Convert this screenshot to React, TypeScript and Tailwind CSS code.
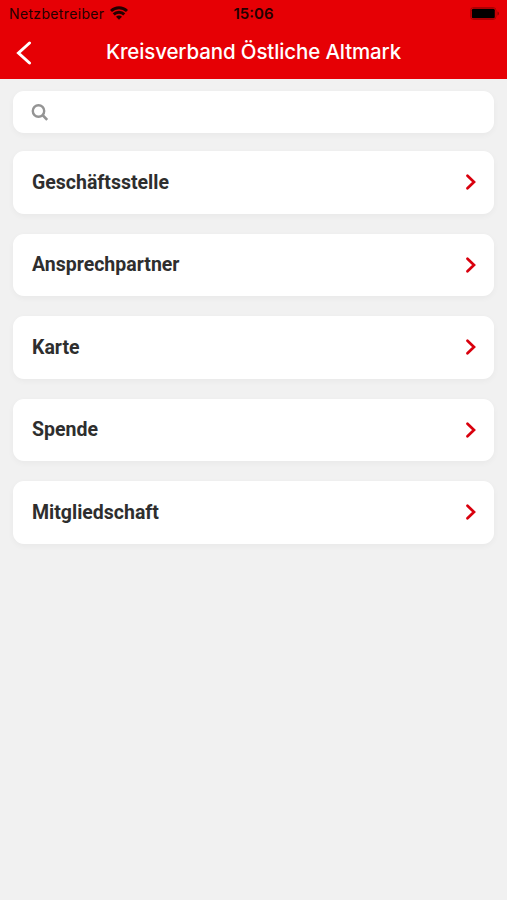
import { useState } from "react";

const menuItems = [
  { id: 1, title: "Geschäftsstelle" },
  { id: 2, title: "Ansprechpartner" },
  { id: 3, title: "Karte" },
  { id: 4, title: "Spende" },
  { id: 5, title: "Mitgliedschaft" },
];

const StatusBar = () => (
  <div className="grid h-[27px] grid-cols-3 items-center px-[7px] text-[#240000]">
    <div className="flex items-center gap-[6px] pl-[2px]">
      <span className="text-[14px] leading-none tracking-[0.35px]">Netzbetreiber</span>
      <svg className="mb-px h-[14px] w-[18px] shrink-0" viewBox="0 0 18 14" fill="none" stroke="currentColor" strokeWidth="2.9">
        <path d="M1 5C5.5 0.6 12.5 0.6 17 5" />
        <path d="M3.7 8.4C6.6 5.6 11.4 5.6 14.3 8.4" />
        <path d="M9 13.8L6 10.7C7.6 9.1 10.4 9.1 12 10.7Z" fill="currentColor" stroke="none" />
      </svg>
    </div>
    <span className="text-center text-[15px] font-semibold leading-none">15:06</span>
    <svg className="h-[13px] w-[30px] justify-self-end" viewBox="0 0 30 13">
      <rect x="0.5" y="0.5" width="25.5" height="12" rx="3" fill="none" stroke="currentColor" strokeOpacity="0.3" />
      <rect x="1.8" y="1.8" width="23" height="9.4" rx="1.5" fill="black" />
      <path d="M27.5 4.5C29.3 5 29.3 8 27.5 8.5Z" fill="currentColor" fillOpacity="0.5" />
    </svg>
  </div>
);

const App = () => {
  const [searchTerm, setSearchTerm] = useState("");

  const filteredItems = menuItems.filter((item) =>
    item.title.toLowerCase().includes(searchTerm.toLowerCase())
  );

  return (
    <div className="min-h-screen bg-[#f1f1f1] font-[Inter,sans-serif]">
      <header className="h-[79px] bg-[#e60005]">
        <StatusBar />
        <div className="grid h-[51px] grid-cols-[48px_1fr_48px] items-center">
          <button aria-label="Zurück" className="pl-4">
            <svg className="h-6 w-4" viewBox="0 0 16 24" fill="none" stroke="white" strokeWidth="3" strokeLinecap="round">
              <path d="M13.5 2L2.5 12L13.5 22" />
            </svg>
          </button>
          <h1 className="whitespace-nowrap text-center text-[20.5px] font-medium tracking-[-0.13px] text-white">
            Kreisverband Östliche Altmark
          </h1>
        </div>
      </header>

      <main className="px-[13px] pt-3 font-[Roboto,sans-serif]">
        <label className="flex h-[42px] items-center rounded-[11px] bg-white pl-[18px] pr-4 shadow-[0_2px_6px_rgba(0,0,0,0.04)]">
          <svg className="mt-[2px] h-[18px] w-[18px] shrink-0" viewBox="0 0 18 18" fill="none" stroke="#949494" strokeWidth="2.4">
            <circle cx="7.5" cy="7" r="5.7" />
            <path d="M11.5 11L16.2 15.8" strokeWidth="2.6" />
          </svg>
          <input
            type="text"
            aria-label="Suche"
            className="ml-3 min-w-0 flex-1 text-lg focus:outline-none"
            value={searchTerm}
            onChange={(e) => setSearchTerm(e.target.value)}
          />
        </label>

        <div className="mt-[18px] flex flex-col gap-5">
          {filteredItems.map((item) => (
            <button
              key={item.id}
              className="flex h-[62.5px] items-center justify-between rounded-[11px] bg-white pl-[19px] pr-[17px] shadow-[0_2px_6px_rgba(0,0,0,0.04)]"
            >
              <span className="text-[19.5px] font-bold text-[#2e2e2e]">{item.title}</span>
              <svg className="h-4 w-3" viewBox="0 0 12 16" fill="none" stroke="#d9000d" strokeWidth="2.7" strokeLinecap="round">
                <path d="M2.5 1.8L9 8L2.5 14.2" />
              </svg>
            </button>
          ))}
        </div>
      </main>
    </div>
  );
};

export default App;
